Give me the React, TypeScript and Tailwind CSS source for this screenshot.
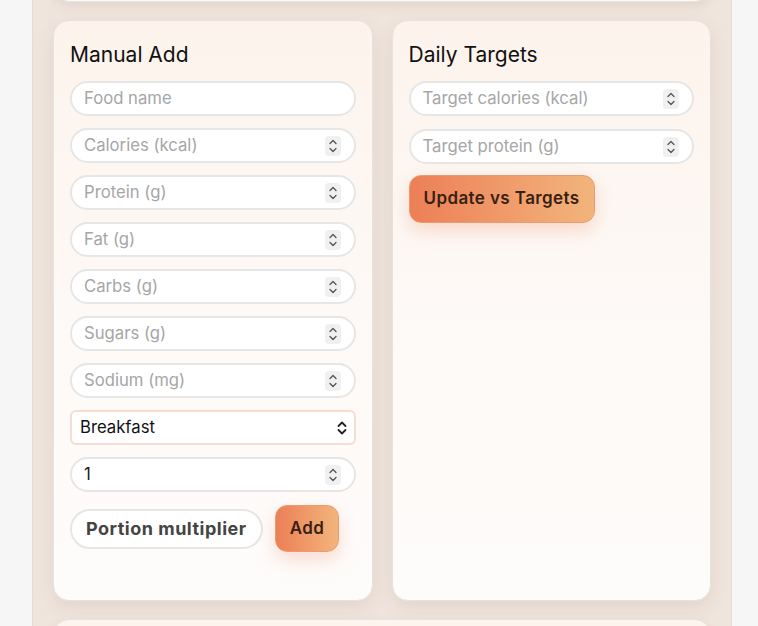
import React from 'react'

const font = { fontFamily: 'Inter, "Noto Sans", sans-serif' }

function Stepper() {
    return (
        <div className="w-[16px] h-[20px] rounded-[4px] bg-[#f0f0f0] flex items-center justify-center">
            <svg width="10" height="16" viewBox="0 0 10 16" fill="none" stroke="#555" strokeWidth="1.3" strokeLinecap="round" strokeLinejoin="round">
                <path d="M2 5.5 5 2.5 8 5.5" />
                <path d="M2 10.5 5 13.5 8 10.5" />
            </svg>
        </div>
    )
}

function NumberField({ placeholder, value }: { placeholder?: string; value?: string }) {
    return (
        <div className="h-[35px] rounded-full border-2 border-[#e6e6e6] bg-white flex items-center pl-[12px] pr-[13px]">
            <span className={`flex-1 text-[16.7px] ${value ? 'text-[#1a1a1a]' : 'text-[#a6a6a6]'}`}>
                {value ?? placeholder}
            </span>
            <Stepper />
        </div>
    )
}

function TextField({ placeholder }: { placeholder: string }) {
    return (
        <div className="h-[35px] rounded-full border-2 border-[#e6e6e6] bg-white flex items-center pl-[12px]">
            <span className="text-[16.7px] text-[#a6a6a6]">{placeholder}</span>
        </div>
    )
}

function Card({ title, children }: { title: string; children: React.ReactNode }) {
    return (
        <div className="min-w-0 rounded-[16px] border border-[#e6e2df] bg-gradient-to-b from-[#fdf3ec] via-[#fdf9f6] to-[#fefcfb] shadow-[0_6px_18px_rgba(120,90,70,0.12)] px-[16px] pt-[20px] pb-[16px]">
            <h2 className="text-[21px] leading-[28px] text-[#111] mb-[12px]">{title}</h2>
            {children}
        </div>
    )
}

const gradBtn =
    'px-[14px] rounded-[12px] border border-[#ec9a70] bg-gradient-to-r from-[#ec7f56] to-[#f2b47c] text-[#3a1f12] font-semibold text-[17px] tracking-[0.4px] shadow-[0_8px_18px_rgba(236,127,86,0.25)]'

export default function App() {
    return (
        <div className="min-h-[626px] bg-[#f6f6f6] overflow-hidden" style={font}>
            <div className="ml-[32px] mr-[26px] -mt-[60px] bg-[#f0e5dd] border-x border-[#eadbd1] px-[20px] py-[20px] flex flex-col gap-[18px]">
                <div className="h-[42px] rounded-[16px] border border-[#e6e2df] bg-[#fdfbfa] shadow-[0_4px_12px_rgba(120,90,70,0.12)]" />

                <div className="grid grid-cols-2 gap-[19px]">
                    <Card title="Manual Add">
                        <div className="flex flex-col gap-[12px]">
                            <TextField placeholder="Food name" />
                            <NumberField placeholder="Calories (kcal)" />
                            <NumberField placeholder="Protein (g)" />
                            <NumberField placeholder="Fat (g)" />
                            <NumberField placeholder="Carbs (g)" />
                            <NumberField placeholder="Sugars (g)" />
                            <NumberField placeholder="Sodium (mg)" />
                            <div className="h-[35px] rounded-[6px] border-2 border-[#f8dcd3] bg-white flex items-center pl-[8px] pr-[6px]">
                                <span className="flex-1 text-[16.7px] text-[#111]">Breakfast</span>
                                <svg width="12" height="16" viewBox="0 0 12 16" fill="none" stroke="#222" strokeWidth="1.8" strokeLinecap="round" strokeLinejoin="round">
                                    <path d="M2.5 6 6 2.5 9.5 6" />
                                    <path d="M2.5 10 6 13.5 9.5 10" />
                                </svg>
                            </div>
                            <NumberField value="1" />
                        </div>
                        <div className="flex items-center gap-[12px] mt-[13px] mb-[32px]">
                            <div className="h-[40px] px-[14px] rounded-full border-2 border-[#e6e6e6] bg-white flex items-center text-[18px] font-bold tracking-[0.5px] text-[#444]">
                                Portion multiplier
                            </div>
                            <button className={`h-[47px] ${gradBtn}`}>Add</button>
                        </div>
                    </Card>

                    <Card title="Daily Targets">
                        <div className="flex flex-col gap-[13px]">
                            <NumberField placeholder="Target calories (kcal)" />
                            <NumberField placeholder="Target protein (g)" />
                        </div>
                        <button className={`mt-[11px] h-[48px] ${gradBtn}`}>Update vs Targets</button>
                    </Card>
                </div>

                <div className="h-[80px] rounded-[16px] border border-[#e6e2df] bg-[#fdf4ee] shadow-[0_4px_12px_rgba(120,90,70,0.12)]" />
            </div>
        </div>
    )
}
